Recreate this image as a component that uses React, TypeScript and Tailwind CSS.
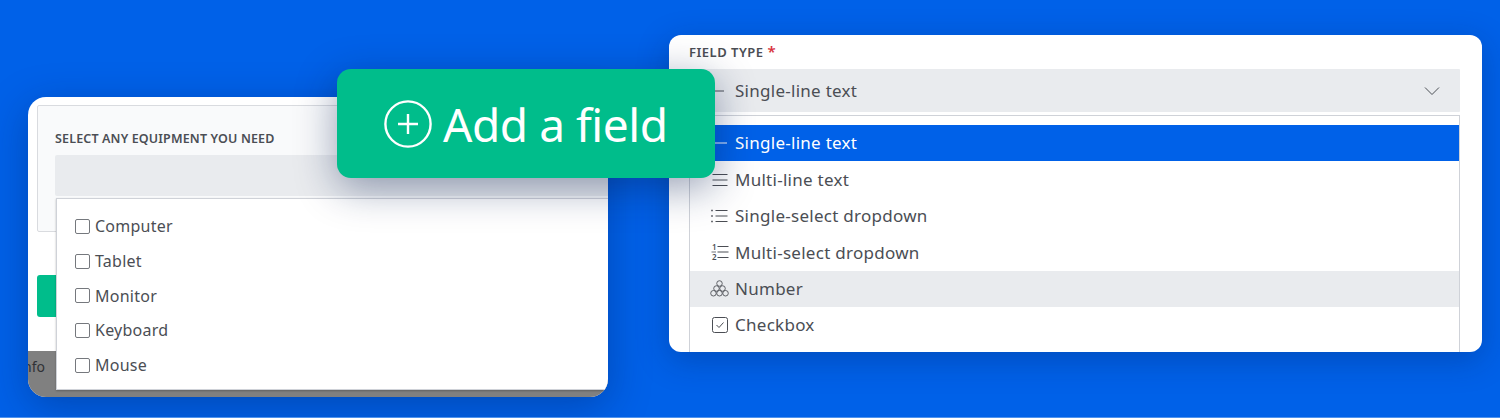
const font = "font-['Noto_Sans','Open_Sans',sans-serif]";

function LineIcon() {
  return (
    <svg width="16" height="16" viewBox="0 0 16 16" fill="none" stroke="currentColor" strokeWidth="1">
      <path d="M1 8h14" />
    </svg>
  );
}

function MultiLineIcon() {
  return (
    <svg width="16" height="16" viewBox="0 0 16 16" fill="none" stroke="currentColor" strokeWidth="1">
      <path d="M0.5 2.5h15M0.5 8h15M0.5 13.5h15" />
    </svg>
  );
}

function BulletListIcon() {
  return (
    <svg width="17" height="16" viewBox="0 0 17 16" fill="none" stroke="currentColor" strokeWidth="1">
      <path d="M4.5 2.5h12M4.5 8h12M4.5 13.5h12" />
      <path d="M0.2 2.5h1.6M0.2 8h1.6M0.2 13.5h1.6" strokeWidth="1.5" />
    </svg>
  );
}

function NumberListIcon() {
  return (
    <svg width="18" height="18" viewBox="0 0 18 18" fill="none" stroke="currentColor">
      <path d="M6.5 3.5h11M6.5 9h11M6.5 14.5h11" strokeWidth="1" />
      <path d="M0.5 9h4.5" strokeWidth="0.8" />
      <text x="1" y="7" fontSize="8" fill="currentColor" stroke="none" fontWeight="600">1</text>
      <text x="1" y="16.5" fontSize="8" fill="currentColor" stroke="none" fontWeight="600">2</text>
    </svg>
  );
}

function CirclesIcon() {
  return (
    <svg width="22" height="19" viewBox="0 0 22 19" fill="none" stroke="currentColor" strokeWidth="1">
      <circle cx="11" cy="3.7" r="3.2" />
      <circle cx="7.5" cy="9.5" r="3.2" />
      <circle cx="14.5" cy="9.5" r="3.2" />
      <circle cx="4" cy="15" r="3.2" />
      <circle cx="11" cy="15" r="3.2" />
      <circle cx="18" cy="15" r="3.2" />
    </svg>
  );
}

function CheckboxIcon() {
  return (
    <svg width="16" height="16" viewBox="0 0 16 16" fill="none" stroke="currentColor" strokeWidth="1">
      <rect x="0.5" y="0.5" width="15" height="15" rx="2" />
      <path d="M4.5 8l2.5 2.5 4.5-5" />
    </svg>
  );
}

const fieldTypes = [
  { label: "Single-line text", icon: <LineIcon />, state: "selected" },
  { label: "Multi-line text", icon: <MultiLineIcon />, state: "" },
  { label: "Single-select dropdown", icon: <BulletListIcon />, state: "" },
  { label: "Multi-select dropdown", icon: <NumberListIcon />, state: "" },
  { label: "Number", icon: <CirclesIcon />, state: "hover" },
  { label: "Checkbox", icon: <CheckboxIcon />, state: "" },
];

const equipment = ["Computer", "Tablet", "Monitor", "Keyboard", "Mouse"];

function EquipmentCard() {
  return (
    <div className="absolute left-[28px] top-[97px] flex h-[300px] w-[580px] flex-col overflow-hidden rounded-[18px] bg-white shadow-[0_10px_40px_rgba(0,30,90,0.35)]">
      <div className="pl-[9px] pt-[8px]">
        <div className="-mr-[20px] h-[127px] rounded-[2px] border border-[#d9dbdf] bg-[#f9fafb] pl-[17px] pt-[25px]">
          <div className="text-[12.5px] font-semibold leading-[16px] tracking-[0.15px] text-[#4b4e54]">
            SELECT ANY EQUIPMENT YOU NEED
          </div>
          <div className="mt-[8px] h-[41px] rounded-[2px] bg-[#e9ebee]" />
        </div>
        <div className="mt-[43px] h-[42px] w-[60px] rounded-[3px] bg-[#00bd8b]" />
      </div>
      <div className="mt-auto h-[46px] overflow-hidden bg-[#808080] pt-[6px] text-[14px] leading-[20px] text-[#303236]">
        <span className="-ml-[5px] block">nfo</span>
      </div>
      <div className="absolute left-[28px] top-[101px] flex h-[192px] w-[552px] flex-col border border-r-0 border-[#cfd2d8] bg-white pl-[18px] pt-[10px] shadow-[0_1px_2px_rgba(0,0,0,0.25)]">
        {equipment.map((item) => (
          <div key={item} className="flex h-[34.7px] items-center gap-[5px] text-[16px] tracking-[0.25px] text-[#4b4e54]">
            <span className="h-[15px] w-[15px] rounded-[2px] border border-[#75787d] bg-white" />
            {item}
          </div>
        ))}
      </div>
    </div>
  );
}

function FieldTypeCard() {
  return (
    <div className="absolute left-[669px] top-[35px] h-[317px] w-[813px] overflow-hidden rounded-[12px] bg-white pl-[20px] pr-[22px] pt-[9px] shadow-[0_8px_32px_rgba(0,30,90,0.3)]">
      <div className="text-[13px] font-semibold leading-[16px] tracking-[0.5px] text-[#4b4e54]">
        FIELD TYPE <span className="text-[15px] leading-[10px] text-[#d8323c]">*</span>
      </div>
      <div className="mt-[9px] flex h-[43px] items-center rounded-[1px] bg-[#e9ebee] pl-[20px] pr-[20px] text-[#4b4e54]">
        <span className="flex w-[26px] shrink-0 items-center"><LineIcon /></span>
        <span className="text-[17px] tracking-[0.27px]">Single-line text</span>
        <svg className="ml-auto" width="16" height="10" viewBox="0 0 16 10" fill="none" stroke="currentColor" strokeWidth="1">
          <path d="M1 1.5l7 7 7-7" />
        </svg>
      </div>
      <div className="mt-[3px] h-[240px] border border-b-0 border-[#cfd2d8] pt-[9px]">
        {fieldTypes.map((row) => (
          <div
            key={row.label}
            className={
              "flex h-[36.4px] items-center pl-[20px] text-[17px] tracking-[0.27px] " +
              (row.state === "selected"
                ? "bg-[#0061e8] text-white"
                : row.state === "hover"
                  ? "bg-[#e9ebee] text-[#4b4e54]"
                  : "text-[#4b4e54]")
            }
          >
            <span className="flex w-[25px] shrink-0 items-center justify-center pr-[6px]">{row.icon}</span>
            {row.label}
          </div>
        ))}
      </div>
    </div>
  );
}

function AddFieldBadge() {
  return (
    <div className="absolute left-[337px] top-[69px] flex h-[109px] w-[378px] items-center gap-[11px] rounded-[14px] bg-[#00bd8b] pl-[47px] text-white shadow-[0_10px_40px_rgba(10,30,80,0.42)]">
      <svg width="48" height="48" viewBox="0 0 48 48" fill="none" stroke="currentColor" strokeWidth="2.4">
        <circle cx="24" cy="24" r="22.6" />
        <path d="M24 14v20M14 24h20" />
      </svg>
      <span className="text-[46px] leading-none tracking-[-0.45px]">Add a field</span>
    </div>
  );
}

export default function App() {
  return (
    <div className={`relative h-[418px] w-[1500px] overflow-hidden border-b border-[#4f93ee] bg-[#0061e8] ${font}`}>
      <EquipmentCard />
      <FieldTypeCard />
      <AddFieldBadge />
    </div>
  );
}
